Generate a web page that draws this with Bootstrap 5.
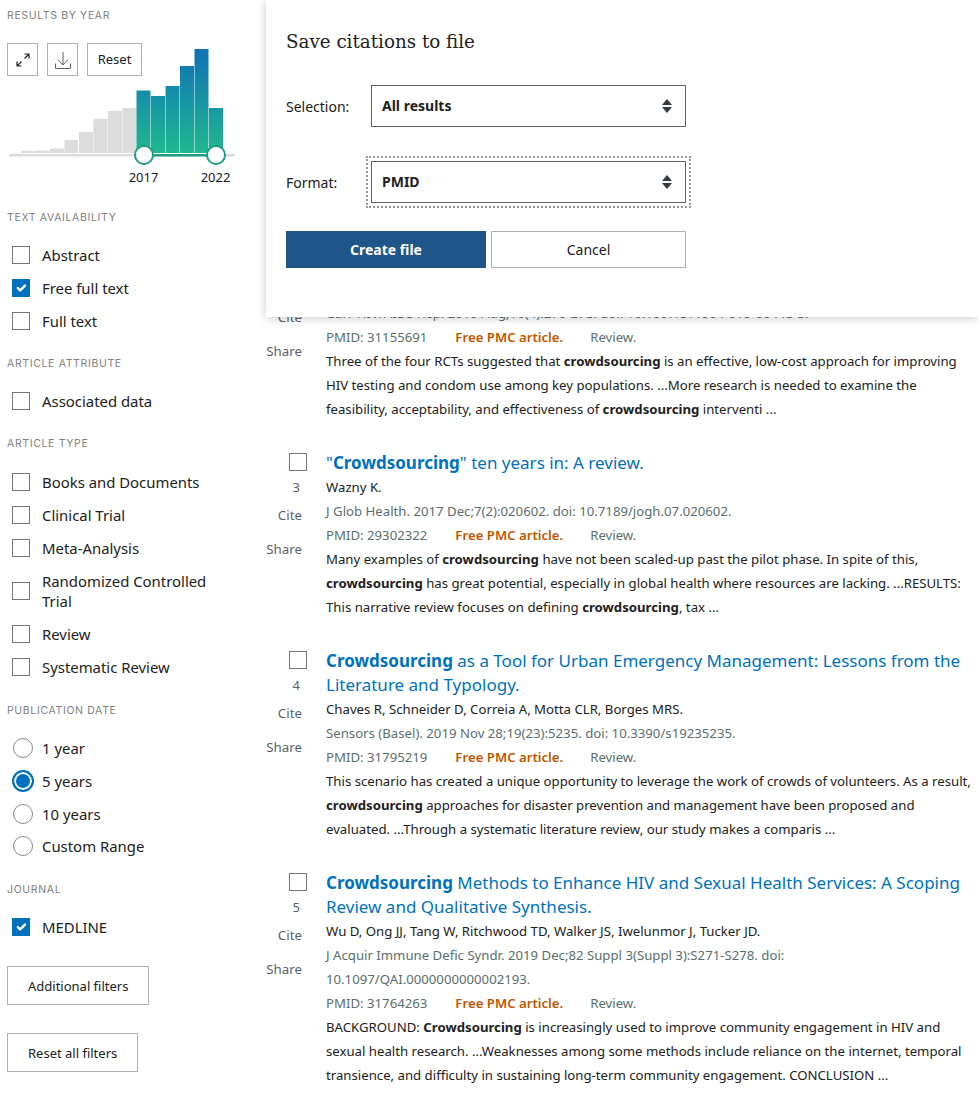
<!DOCTYPE html>
<html lang="en">
<head>
<meta charset="UTF-8">
<meta name="viewport" content="width=device-width, initial-scale=1.0">
<title>Save citations to file</title>
<link href="https://cdn.jsdelivr.net/npm/bootstrap@5.3.3/dist/css/bootstrap.min.css" rel="stylesheet">
<script src="https://cdn.jsdelivr.net/npm/bootstrap@5.3.3/dist/js/bootstrap.bundle.min.js"></script>
<style>
  body { font-family: "Noto Sans", sans-serif; font-size: 14px; color: #212121; background: #fff; height: 1093px; overflow: hidden; position: relative; }
  .side { width: 250px; flex: none; padding-left: 7px; }
  .side-head { font-family: Inter, sans-serif; font-size: 10.5px; letter-spacing: .65px; text-transform: uppercase; color: #808080; line-height: 14px; margin-top: 20px; margin-bottom: 13px; }
  .side-head.first { margin-top: 0; padding-top: 9px; margin-bottom: 8px; }
  .side-head.after-chart { margin-top: -10px; }
  .side-head.roomy { margin-bottom: 14px; }
  .side-head.wide-top { margin-top: 21px; }
  .chart-wrap { position: relative; width: 243px; height: 190px; margin-left: -7px; }
  .chart-pic { position: absolute; left: 0; top: -31px; }
  .chart-btns { position: absolute; left: 7px; top: 12px; z-index: 2; gap: 9px; }
  .sq-btn { border: 1px solid #aeb0b5; border-radius: 0; background: #fff; padding: 0; height: 33px; width: 31px; display: flex; align-items: center; justify-content: center; color: #212121; font-size: 13px; }
  .sq-btn.wide { width: 55px; }
  .filter-list { padding-left: 5px; margin: 0; }
  .filter-row { display: flex; align-items: center; height: 33px; font-size: 14.9px; line-height: 20px; gap: 12px; }
  .filter-row.radio-row { height: 32.7px; }
  .filter-row .form-check-input { width: 18px; height: 18px; margin: 0; border: 1px solid #757575; border-radius: 0; flex: none; }
  .filter-row .form-check-input:checked { background-color: #0071bc; border-color: #0071bc; }
  .filter-row .form-check-input[type=radio] { width: 20px; height: 20px; border-radius: 50%; margin-left: 1px; margin-right: -3px; border: 1.5px solid #8a8a8a; }
  .filter-row .form-check-input[type=radio]:checked { background-image: none; background-color: #0071bc; border: 2px solid #0071bc; box-shadow: inset 0 0 0 2px #fff; width: 22px; height: 22px; margin-left: 0; margin-right: -4px; }
  .two-line { height: 53px; }
  .plain-btn { display: block; border: 1px solid #aeb0b5; border-radius: 0; background: #fff; color: #212121; font-size: 13px; height: 39px; padding: 2px 20px 0; margin-top: 28px; }
  .plain-btn.first { margin-top: 22px; }
  .res { position: relative; flex: 1; padding-top: 301px; min-width: 0; }
  .art { display: flex; margin-bottom: 30px; }
  .art-left { width: 57px; flex: none; margin-right: 19px; text-align: right; color: #5b616b; font-size: 13.3px; padding-top: 2px; }
  .art-left.cut { padding-top: 6px; }
  .art-left.cut .cite { margin-top: 0; }
  .art-left .form-check-input { width: 18px; height: 18px; border: 1px solid #757575; border-radius: 0; margin: 0; display: block; margin-left: auto; }
  .art-num { display: block; color: #5b616b; line-height: 20px; margin-top: 6px; padding-right: 7px; font-size: 13px; }
  .art-act { display: block; line-height: 20px; padding-right: 5px; }
  .art-act.cite { margin-top: 8px; }
  .art-act.share { margin-top: 14px; }
  .art-body { flex: 1; min-width: 0; line-height: 24px; font-size: 13.2px; }
  .art-title { font-size: 17px; color: #0071bc; text-decoration: none; display: block; line-height: 24px; }
  .art-title b { font-weight: 700; }
  .art-cite { color: #5b6e6e; }
  .art-free { color: #c05600; font-weight: 600; margin: 0 27px 0 28px; }
  .art-snip b { font-weight: 700; }
  .save-box { position: absolute; left: 266px; top: 0; width: 713px; height: 317px; background: #fff; box-shadow: 0 1px 9px rgba(0,0,0,.22); z-index: 5; padding: 0 20px; }
  .save-title { font-family: "DejaVu Serif", serif; font-size: 18.3px; font-weight: 400; color: #212121; margin: 28px 0 0; line-height: 28px; height: 57px; }
  .save-row { display: flex; align-items: center; height: 42px; }
  .save-row.second { margin-top: 34px; }
  .save-row label { width: 85px; flex: none; font-size: 14px; }
  .save-row .form-select { width: 315px; height: 42px; border: 1px solid #5b616b; border-radius: 0; font-weight: 700; color: #212121; font-size: 14px; padding: 0 10px 2px; background-image: url("data:image/svg+xml,%3csvg xmlns='http://www.w3.org/2000/svg' viewBox='0 0 12 16'%3e%3cpath fill='%23343a40' d='M6 1l5 6H1zM6 15l5-6H1z'/%3e%3c/svg%3e"); background-size: 12px 16px; background-position: right 12px center; }
  .save-focus { outline: 2px dotted #999; outline-offset: 3px; box-shadow: none !important; }
  .save-btns { margin-top: 28px; gap: 5px; }
  .save-go { width: 200px; height: 37px; background: #20558a; border: 1px solid #20558a; color: #fff; border-radius: 0; font-weight: 700; font-size: 14px; padding: 0; }
  .save-no { width: 195px; height: 37px; background: #fff; border: 1px solid #aeb0b5; color: #212121; border-radius: 0; font-size: 14px; padding: 0; }
</style>
</head>
<body>
<div class="d-flex">
  <!-- filters -->
  <aside class="side">
    <div class="side-head first">Results by year</div>
    <div class="chart-wrap">
      <svg class="chart-pic" width="243" height="190" viewBox="0 0 243 190">
        <defs><linearGradient id="barfill" gradientUnits="userSpaceOnUse" x1="0" y1="49" x2="0" y2="153"><stop offset="0" stop-color="#0f71b8"/><stop offset="1" stop-color="#20b890"/></linearGradient></defs>
        <g fill="#dcdcdc">
          <rect x="21" y="151" width="14" height="2"/><rect x="35.500" y="150.500" width="14" height="2.500"/><rect x="50" y="148.500" width="14" height="4.500"/><rect x="64.500" y="140" width="13.500" height="13"/><rect x="79" y="132" width="14" height="21"/><rect x="93.500" y="119" width="14" height="34"/><rect x="108" y="111" width="14" height="42"/><rect x="122.500" y="108" width="14" height="45"/>
        </g>
        <g fill="url(#barfill)">
          <rect x="136.500" y="90.500" width="14" height="62.500"/><rect x="151" y="96" width="14" height="57"/><rect x="165.500" y="86" width="14" height="67"/><rect x="180" y="66" width="14" height="87"/><rect x="194.500" y="49" width="14" height="104"/><rect x="209" y="108" width="14" height="45"/>
        </g>
        <rect x="9" y="154" width="226" height="2.500" fill="#dcdcdc"/>
        <rect x="144" y="154" width="72" height="2.500" fill="#1f9c83"/>
        <circle cx="144" cy="155" r="9" fill="#fff" stroke="#1f9c83" stroke-width="2"/>
        <circle cx="216" cy="155" r="9" fill="#fff" stroke="#1f9c83" stroke-width="2"/>
        <text x="143.500" y="182" text-anchor="middle" font-family="Noto Sans, sans-serif" font-size="13" fill="#212121">2017</text>
        <text x="215.500" y="182" text-anchor="middle" font-family="Noto Sans, sans-serif" font-size="13" fill="#212121">2022</text>
      </svg>
      <div class="chart-btns d-flex">
        <button class="sq-btn" aria-label="Expand">
          <svg width="14" height="14" viewBox="0 0 14 14" fill="none" stroke="#212121" stroke-width="1.2"><path d="M8.500 5.500 13 1M8.500 1H13v4.500M5.500 8.500 1 13M1 8.500V13h4.500"/></svg>
        </button>
        <button class="sq-btn" aria-label="Download">
          <svg width="16" height="18" viewBox="0 0 16 18" fill="none" stroke="#5b616b" stroke-width="1"><path d="M8 1v13M3 8.500 8 14l5-5.500M.5 12.500v5h15v-5"/></svg>
        </button>
        <button class="sq-btn wide">Reset</button>
      </div>
    </div>

    <div class="side-head after-chart">Text availability</div>
    <div class="filter-list">
      <div class="filter-row"><input class="form-check-input" type="checkbox"><span>Abstract</span></div>
      <div class="filter-row"><input class="form-check-input" type="checkbox" checked><span>Free full text</span></div>
      <div class="filter-row"><input class="form-check-input" type="checkbox"><span>Full text</span></div>
    </div>

    <div class="side-head">Article attribute</div>
    <div class="filter-list">
      <div class="filter-row"><input class="form-check-input" type="checkbox"><span>Associated data</span></div>
    </div>

    <div class="side-head roomy">Article type</div>
    <div class="filter-list">
      <div class="filter-row"><input class="form-check-input" type="checkbox"><span>Books and Documents</span></div>
      <div class="filter-row"><input class="form-check-input" type="checkbox"><span>Clinical Trial</span></div>
      <div class="filter-row"><input class="form-check-input" type="checkbox"><span>Meta-Analysis</span></div>
      <div class="filter-row two-line"><input class="form-check-input" type="checkbox"><span>Randomized Controlled<br>Trial</span></div>
      <div class="filter-row"><input class="form-check-input" type="checkbox"><span>Review</span></div>
      <div class="filter-row"><input class="form-check-input" type="checkbox"><span>Systematic Review</span></div>
    </div>

    <div class="side-head wide-top roomy">Publication date</div>
    <div class="filter-list">
      <div class="filter-row radio-row"><input class="form-check-input" type="radio" name="pdate"><span>1 year</span></div>
      <div class="filter-row radio-row"><input class="form-check-input" type="radio" name="pdate" checked><span>5 years</span></div>
      <div class="filter-row radio-row"><input class="form-check-input" type="radio" name="pdate"><span>10 years</span></div>
      <div class="filter-row radio-row"><input class="form-check-input" type="radio" name="pdate"><span>Custom Range</span></div>
    </div>

    <div class="side-head roomy">Journal</div>
    <div class="filter-list">
      <div class="filter-row"><input class="form-check-input" type="checkbox" checked><span>MEDLINE</span></div>
    </div>

    <button class="plain-btn first">Additional filters</button>
    <button class="plain-btn">Reset all filters</button>
  </aside>

  <!-- results -->
  <main class="res">
    <article class="art">
      <div class="art-left cut">
        <span class="art-act cite">Cite</span>
        <span class="art-act share">Share</span>
      </div>
      <div class="art-body">
        <div class="art-cite">Curr HIV/AIDS Rep. 2019 Aug;16(4):270-278. doi: 10.1007/s11904-019-00448-3.</div>
        <div class="art-cite">PMID: 31155691<span class="art-free">Free PMC article.</span>Review.</div>
        <div class="art-snip">Three of the four RCTs suggested that <b>crowdsourcing</b> is an effective, low-cost approach for improving<br>HIV testing and condom use among key populations. ...More research is needed to examine the<br>feasibility, acceptability, and effectiveness of <b>crowdsourcing</b> interventi ...</div>
      </div>
    </article>
    <article class="art">
      <div class="art-left">
        <input class="form-check-input" type="checkbox">
        <span class="art-num">3</span>
        <span class="art-act cite">Cite</span>
        <span class="art-act share">Share</span>
      </div>
      <div class="art-body">
        <a class="art-title" href="#">"<b>Crowdsourcing</b>" ten years in: A review.</a>
        <div>Wazny K.</div>
        <div class="art-cite">J Glob Health. 2017 Dec;7(2):020602. doi: 10.7189/jogh.07.020602.</div>
        <div class="art-cite">PMID: 29302322<span class="art-free">Free PMC article.</span>Review.</div>
        <div class="art-snip">Many examples of <b>crowdsourcing</b> have not been scaled-up past the pilot phase. In spite of this,<br><b>crowdsourcing</b> has great potential, especially in global health where resources are lacking. ...RESULTS:<br>This narrative review focuses on defining <b>crowdsourcing</b>, tax ...</div>
      </div>
    </article>
    <article class="art">
      <div class="art-left">
        <input class="form-check-input" type="checkbox">
        <span class="art-num">4</span>
        <span class="art-act cite">Cite</span>
        <span class="art-act share">Share</span>
      </div>
      <div class="art-body">
        <a class="art-title" href="#"><b>Crowdsourcing</b> as a Tool for Urban Emergency Management: Lessons from the<br>Literature and Typology.</a>
        <div>Chaves R, Schneider D, Correia A, Motta CLR, Borges MRS.</div>
        <div class="art-cite">Sensors (Basel). 2019 Nov 28;19(23):5235. doi: 10.3390/s19235235.</div>
        <div class="art-cite">PMID: 31795219<span class="art-free">Free PMC article.</span>Review.</div>
        <div class="art-snip">This scenario has created a unique opportunity to leverage the work of crowds of volunteers. As a result,<br><b>crowdsourcing</b> approaches for disaster prevention and management have been proposed and<br>evaluated. ...Through a systematic literature review, our study makes a comparis ...</div>
      </div>
    </article>
    <article class="art">
      <div class="art-left">
        <input class="form-check-input" type="checkbox">
        <span class="art-num">5</span>
        <span class="art-act cite">Cite</span>
        <span class="art-act share">Share</span>
      </div>
      <div class="art-body">
        <a class="art-title" href="#"><b>Crowdsourcing</b> Methods to Enhance HIV and Sexual Health Services: A Scoping<br>Review and Qualitative Synthesis.</a>
        <div>Wu D, Ong JJ, Tang W, Ritchwood TD, Walker JS, Iwelunmor J, Tucker JD.</div>
        <div class="art-cite">J Acquir Immune Defic Syndr. 2019 Dec;82 Suppl 3(Suppl 3):S271-S278. doi:<br>10.1097/QAI.0000000000002193.</div>
        <div class="art-cite">PMID: 31764263<span class="art-free">Free PMC article.</span>Review.</div>
        <div class="art-snip">BACKGROUND: <b>Crowdsourcing</b> is increasingly used to improve community engagement in HIV and<br>sexual health research. ...Weaknesses among some methods include reliance on the internet, temporal<br>transience, and difficulty in sustaining long-term community engagement. CONCLUSION ...</div>
      </div>
    </article>
  </main>
</div>

<!-- save citations panel -->
<div class="save-box">
  <h2 class="save-title">Save citations to file</h2>
  <div class="save-row">
    <label for="sel">Selection:</label>
    <select id="sel" class="form-select"><option>All results</option></select>
  </div>
  <div class="save-row second">
    <label for="fmt">Format:</label>
    <select id="fmt" class="form-select save-focus"><option>PMID</option></select>
  </div>
  <div class="d-flex save-btns">
    <button class="btn save-go">Create file</button>
    <button class="btn save-no">Cancel</button>
  </div>
</div>
</body>
</html>
